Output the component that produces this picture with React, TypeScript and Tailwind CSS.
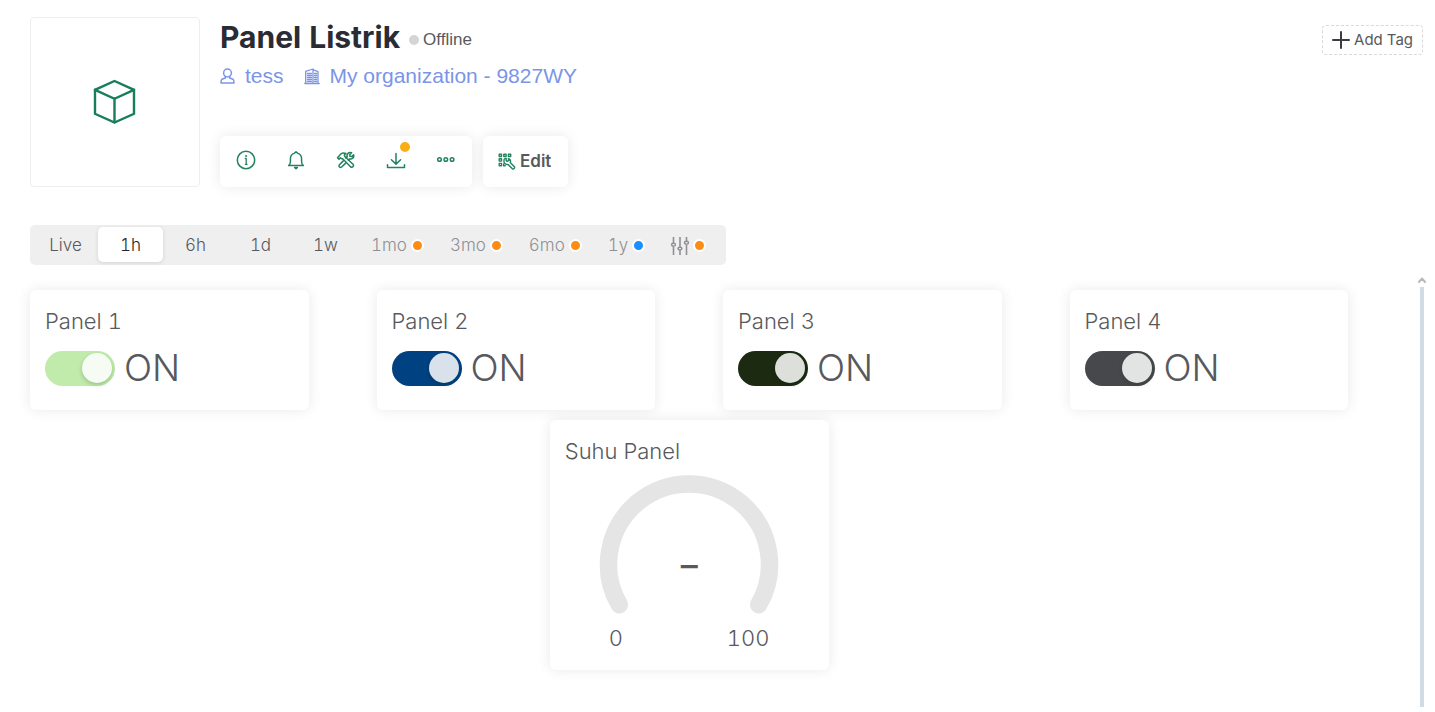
import { useState } from "react";
import type { ReactNode } from "react";

const stroke = {
  fill: "none",
  stroke: "currentColor",
  strokeLinecap: "round" as const,
  strokeLinejoin: "round" as const,
};

function CubeIcon() {
  return (
    <svg width="44" height="46" viewBox="0 0 44 46" {...stroke} strokeWidth="2.4" strokeLinejoin="miter" aria-hidden="true">
      <path d="M21.500 2 41 10.800v24L21.500 43.500 2 34.800v-24z" />
      <path d="M2 10.800 21.500 19.800l19.500-9M21.500 19.800v23.500" />
    </svg>
  );
}

function InfoIcon() {
  return (
    <svg width="20" height="20" viewBox="0 0 20 20" {...stroke} strokeWidth="1.500" aria-hidden="true">
      <circle cx="10" cy="10" r="8.700" />
      <path d="M9.300 8.500h.9v5.600M9.300 14.300h1.800" strokeWidth="1.300" />
      <circle cx="10" cy="6" r="0.600" fill="currentColor" strokeWidth="0.800" />
    </svg>
  );
}

function BellIcon() {
  return (
    <svg width="20" height="20" viewBox="0 0 20 20" {...stroke} strokeWidth="1.500" aria-hidden="true">
      <path d="M2.600 15.500h14.800c-1.300-.9-1.800-1.700-1.800-3.500V9c0-3-1.700-5.200-4.100-5.900L10 1.700 8.500 3.100C6.100 3.800 4.400 6 4.400 9v3c0 1.800-.5 2.600-1.800 3.500z" />
      <path d="M8.600 17.400h2.800L10 18.700z" fill="currentColor" />
    </svg>
  );
}

function ToolsIcon() {
  return (
    <svg width="20" height="20" viewBox="0 0 20 20" {...stroke} strokeWidth="1.500" aria-hidden="true">
      <path d="M1.500 7.700 5 3.800c1.500-.9 3.200-.9 4.900-.3L8.300 5.100l.7 1.700 8.300 7.700c.9 1.600-.9 3.300-2.500 2.500L6.900 9 5.300 8.500 4.400 7.700 3 9.100z" />
      <path d="m11 7.100.1-2.200c.6-1.900 2.500-2.700 4.500-2.100l-1.900 2 .3 1.500 1.600.3 2-1.900c.6 2-.6 3.800-2.600 4.400l-1.800-.1M7.300 10.900l-4.100 4.100c-.9 1.500.7 3 2.200 2.200l4.300-4.100" />
      <path d="m9.600 7.900 1.400-1.100M12.400 10.200l1-.8" />
    </svg>
  );
}

function DownloadIcon() {
  return (
    <svg width="20" height="20" viewBox="0 0 20 20" {...stroke} strokeWidth="1.500" aria-hidden="true">
      <path d="M10 3.500v10.500M5.400 9.800 10 14.100l4.600-4.300M1.500 14.800v2.600h17v-2.600" />
    </svg>
  );
}

function MoreIcon() {
  return (
    <svg width="20" height="20" viewBox="0 0 20 20" {...stroke} strokeWidth="1.500" aria-hidden="true">
      <circle cx="3.500" cy="9.500" r="1.800" />
      <circle cx="9.800" cy="9.500" r="1.800" />
      <circle cx="16.100" cy="9.500" r="1.800" />
    </svg>
  );
}

function EditIcon() {
  return (
    <svg width="18" height="18" viewBox="0 0 18 18" {...stroke} strokeWidth="1.400" aria-hidden="true">
      <path d="M1.200 1.200h2.300v2.300H1.200zM5.800 1.200h2.300v2.300H5.800zM10.400 1.200h2.300v2.300h-2.300zM1.200 5.800h2.300v2.300H1.200zM1.200 10.400h2.300v2.300H1.200zM5.600 11v1.700h1.600" />
      <path d="M6 7.300C5.900 5.900 7 5.300 8.200 5.500l-.1 2 1.100.9 1.800-1-.7-1.800c2 .3 2.700 2.300 1.900 3.900l4.200 4.300c.8 1.300-.7 2.700-2 2l-4.300-4.300C8 11.900 6 10.400 6 8.700z" />
    </svg>
  );
}

function UserIcon() {
  return (
    <svg width="15" height="17" viewBox="0 0 15 17" {...stroke} strokeWidth="1.500" aria-hidden="true">
      <circle cx="7.500" cy="5" r="3.900" />
      <path d="M5.300 8.500v1.500L2 11.200c-.8.500-1 1.200-1 3.900h13c0-2.700-.2-3.400-1-3.900L9.700 10V8.500" />
    </svg>
  );
}

function BuildingIcon() {
  return (
    <svg width="16" height="17" viewBox="0 0 16 17" {...stroke} strokeWidth="1.300" aria-hidden="true">
      <path d="M.8 15.500h14.400M1.700 15.200V3.400L9 1v14.200M9.500 1.900l4.500 1.800v11.500" />
      <path d="M3.500 5.500h4M3.500 7.500h4M3.500 9.500h4M3.500 11.500h4M3.500 13.500h4M10.600 5.500h2M10.600 7.500h2M10.600 9.500h2M10.600 11.500h2M10.600 13.500h2" />
    </svg>
  );
}

function SlidersIcon() {
  return (
    <svg width="18" height="18" viewBox="0 0 18 18" {...stroke} strokeWidth="1.400" strokeLinecap="butt" aria-hidden="true">
      <path d="M2.500 0v6.200M2.500 9.300V18M9 0v10M9 13.200V18M15.500 0v4.200M15.500 7.300V18" strokeWidth="1.600" />
      <ellipse cx="2.500" cy="7.700" rx="2" ry="1.400" />
      <ellipse cx="9" cy="11.600" rx="2" ry="1.400" />
      <ellipse cx="15.500" cy="5.700" rx="2" ry="1.400" />
    </svg>
  );
}

const actions: { label: string; icon: ReactNode; badge?: boolean }[] = [
  { label: "Device info", icon: <InfoIcon /> },
  { label: "Notifications", icon: <BellIcon /> },
  { label: "Tools", icon: <ToolsIcon /> },
  { label: "Download report", icon: <DownloadIcon />, badge: true },
  { label: "More", icon: <MoreIcon /> },
];

const ranges: { id: string; dot?: string; icon?: boolean }[] = [
  { id: "Live" },
  { id: "1h" },
  { id: "6h" },
  { id: "1d" },
  { id: "1w" },
  { id: "1mo", dot: "bg-[#fd8c16]" },
  { id: "3mo", dot: "bg-[#fd8c16]" },
  { id: "6mo", dot: "bg-[#fd8c16]" },
  { id: "1y", dot: "bg-[#1890ff]" },
  { id: "Custom", dot: "bg-[#fd8c16]", icon: true },
];

const panels = [
  { name: "Panel 1", track: "bg-[#c0ebab]", knob: "before:bg-[#f6fcf3]", place: "col-start-1" },
  { name: "Panel 2", track: "bg-[#004182]", knob: "before:bg-[#d9e1eb]", place: "col-start-7" },
  { name: "Panel 3", track: "bg-[#1b2a11]", knob: "before:bg-[#dddfdb]", place: "col-start-13" },
  { name: "Panel 4", track: "bg-[#47484c]", knob: "before:bg-[#e2e4e3]", place: "col-start-19" },
];

const card = "rounded-md bg-white shadow-[0_0_14px_rgba(0,0,0,0.09)]";

function SwitchCard({ name, track, knob, place }: (typeof panels)[number]) {
  const [on, setOn] = useState(true);
  return (
    <section className={`${card} ${place} col-span-5 row-start-1 px-[15px] pt-4`}>
      <h2 className="text-[22px] leading-[30px] font-light">{name}</h2>
      <label className="mt-[10px] flex items-center gap-[9px]">
        <input
          type="checkbox"
          role="switch"
          aria-label={name}
          checked={on}
          onChange={() => setOn(!on)}
          className={`${track} ${knob} flex h-[35px] w-[70px] appearance-none items-center rounded-full px-[3px] before:size-[30px] before:rounded-full before:shadow-[0_2px_4px_rgba(0,35,11,0.2)] before:content-[''] checked:justify-end`}
        />
        <span className="text-[37px] leading-[44px] font-light">{on ? "ON" : "OFF"}</span>
      </label>
    </section>
  );
}

function GaugeCard() {
  return (
    <section className={`${card} col-span-5 col-start-10 row-start-2 px-[15px] pt-4`}>
      <h2 className="text-[22px] leading-[30px] font-light">Suhu Panel</h2>
      <div className="mt-[9px] grid justify-center">
        <svg width="180" height="140" viewBox="0 0 180 140" className="col-start-1 row-start-1" aria-hidden="true">
          <path d="M20.300 129.700A80.500 80.500 0 1 1 159.700 129.700" fill="none" stroke="#e5e5e5" strokeWidth="17.500" strokeLinecap="round" />
        </svg>
        <span className="col-start-1 row-start-1 pt-[70px] text-center text-[34px] leading-[40px] font-medium">–</span>
      </div>
      <div className="flex justify-between px-[44px] pt-[8px] text-[22px] leading-[30px] font-light">
        <span>0</span>
        <span>100</span>
      </div>
    </section>
  );
}

export default function App() {
  const [range, setRange] = useState("1h");
  return (
    <div className="bg-white pt-[17px] pb-[5px] font-['Inter',sans-serif] text-[#58595d] tabular-nums">
      <header className="flex gap-5 pr-3 pl-[30px]">
        <div className="flex size-[170px] shrink-0 items-center justify-center rounded-[4px] border border-[#eeeeee] text-[#187d5a]">
          <CubeIcon />
        </div>
        <div className="flex flex-1 flex-col">
          <div className="flex items-center">
            <h1 className="text-[30px] leading-[41px] font-bold text-[#2b2c33]">Panel Listrik</h1>
            <span className="mt-1 ml-[9px] size-[10px] rounded-full bg-[#d5d5d5]" />
            <span className="ml-1 pt-[5px] font-['Liberation_Sans',sans-serif] text-[17px] leading-[24px]">Offline</span>
          </div>
          <div className="flex items-center font-['Liberation_Sans',sans-serif] text-[21px] leading-[36px] text-[#7b95e6]">
            <a href="#user" className="flex items-center gap-[10px]">
              <UserIcon />
              tess
            </a>
            <a href="#organization" className="ml-5 flex items-center gap-[10px]">
              <BuildingIcon />
              My organization - 9827WY
            </a>
          </div>
          <div className="mt-auto flex gap-[11px]">
            <div className={`${card} flex px-px text-[#23835f]`}>
              {actions.map((a) => (
                <button key={a.label} type="button" aria-label={a.label} className="relative flex h-[51px] w-[50px] items-center justify-center pb-[3px]">
                  {a.icon}
                  {a.badge && <span className="absolute top-[6px] right-[11px] size-[10px] rounded-full bg-[#faad14]" />}
                </button>
              ))}
            </div>
            <button type="button" className={`${card} flex h-[51px] items-center gap-1 pr-[17px] pl-[15px] text-[17px] font-semibold`}>
              <span className="text-[#23835f]">
                <EditIcon />
              </span>
              Edit
            </button>
          </div>
        </div>
        <button type="button" className="mt-2 flex h-[30px] items-center gap-1 self-start rounded-[4px] border border-dashed border-[#d9d9d9] px-[9px] text-[15px]">
          <svg width="18" height="18" viewBox="0 0 18 18" {...stroke} strokeWidth="2" aria-hidden="true" className="text-[#3b3c40]">
            <path d="M9 1v16M1 9h16" />
          </svg>
          Add Tag
        </button>
      </header>

      <nav aria-label="Time range" className="mt-[38px] ml-[30px] flex h-10 w-fit items-start rounded-[5px] bg-[#efefef] pt-[2px] pr-[7px] pl-[3px] text-[17px] font-light">
        {ranges.map((r) => (
          <button
            key={r.id}
            type="button"
            aria-label={r.id}
            aria-pressed={range === r.id}
            onClick={() => setRange(r.id)}
            className={`flex h-[35px] items-center justify-center gap-1 rounded-[5px] pt-[2px] ${r.dot ? "px-[13px] text-[#8f9094]" : "w-[65px]"} ${
              range === r.id ? "bg-white text-[#24252a] shadow-[0_1px_4px_rgba(0,0,0,0.12)]" : ""
            }`}
          >
            {r.icon ? <SlidersIcon /> : r.id}
            {r.dot && <span className={`${r.dot} size-[13px] rounded-full border-2 border-white`} />}
          </button>
        ))}
      </nav>

      <main className="mt-3 flex gap-3 pr-[9px] pl-[30px]">
        <div className="grid flex-1 grid-cols-[repeat(24,minmax(0,1fr))] grid-rows-[120px_250px] gap-[10px] pt-[13px]">
          {panels.map((p) => (
            <SwitchCard key={p.name} {...p} />
          ))}
          <GaugeCard />
        </div>
        <div className="flex w-2 flex-col items-center gap-[4px]" aria-hidden="true">
          <svg width="8" height="6" viewBox="0 0 8 6" {...stroke} strokeWidth="2" className="shrink-0 text-[#b9b9b9]">
            <path d="M1 5 4 1.500 7 5" />
          </svg>
          <div className="min-h-[420px] w-[4px] flex-1 bg-[#d0dbe3]" />
        </div>
      </main>
    </div>
  );
}
